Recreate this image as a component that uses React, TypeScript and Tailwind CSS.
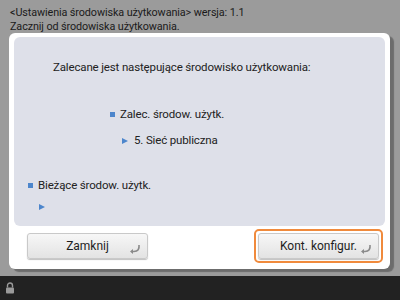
import React from 'react';

const font = { fontFamily: 'Roboto, "Noto Sans", sans-serif' };

const EnterIcon: React.FC = () => (
  <svg width="12" height="10" viewBox="0 0 12 10" className="absolute right-[6px] bottom-[4px]">
    <path d="M10 1 C10.5 5 9 7.5 5 7.5 L2.5 7.5" fill="none" stroke="#8a8a8a" strokeWidth="1.6" />
    <path d="M1 7.5 L4 5 L4 10 Z" fill="#8a8a8a" />
  </svg>
);

const Button: React.FC<{ label: string }> = ({ label }) => (
  <div className="relative w-[121px] h-[26px] flex items-center justify-center rounded-[3px] border border-[#c9c9c9] bg-gradient-to-b from-[#f7f7f7] to-[#e3e3e3] shadow-[0_1px_1px_rgba(0,0,0,0.25)] text-[12px] text-[#1e1e1e]">
    {label}
    <EnterIcon />
  </div>
);

const Square: React.FC = () => <span className="inline-block w-[5px] h-[5px] bg-[#4d86cc] mr-[5px]" />;
const Tri: React.FC = () => (
  <svg width="6" height="6" viewBox="0 0 6 6" className="mr-[6px]">
    <path d="M0 0 L6 3 L0 6 Z" fill="#4d86cc" />
  </svg>
);

const App: React.FC = () => {
  return (
    <div className="w-[400px] h-[300px] bg-[#9b9b9b] flex flex-col overflow-hidden text-[#222222]" style={font}>
      <div className="h-[33px] pl-[10px] pr-[9px] pt-[6px] text-[10.8px] leading-[14px] tracking-[-0.1px] text-[#1a1a1a]">
        <div>&lt;Ustawienia środowiska użytkowania&gt; wersja: 1.1</div>
        <div>Zacznij od środowiska użytkowania.</div>
      </div>
      <div className="ml-[9px] w-[381px] h-[236px] bg-white rounded-[6px] shadow-[4px_3px_1px_rgba(0,0,0,0.3)] px-[5px] pt-[4px] pb-[6px] flex flex-col">
        <div className="h-[193px] bg-[#dee0e9] rounded-[6px] text-[11.5px] tracking-[-0.15px] flex flex-col">
          <div className="pl-[39px] pt-[23px] leading-[15px]">Zalecane jest następujące środowisko użytkowania:</div>
          <div className="pl-[96px] pt-[32px] flex items-center leading-[15px]">
            <Square />Zalec. środow. użytk.
          </div>
          <div className="pl-[108px] pt-[11px] flex items-center leading-[15px]">
            <Tri />5. Sieć publiczna
          </div>
          <div className="pl-[14px] pt-[30px] flex items-center leading-[15px]">
            <Square />Bieżące środow. użytk.
          </div>
          <div className="pl-[25px] pt-[11px] flex items-center">
            <Tri />
          </div>
        </div>
        <div className="flex justify-between items-center mt-[3px] pl-[9px] pr-[2px]">
          <div className="p-[4px]"><Button label="Zamknij" /></div>
          <div className="p-[2px] border-2 border-[#f08a3c] rounded-[5px]"><Button label="Kont. konfigur." /></div>
        </div>
      </div>
      <div className="flex-1" />
      <div className="h-[24px] bg-[#222222] flex items-center pl-[5px]">
        <svg width="10" height="12" viewBox="0 0 10 12">
          <path d="M2.5 5.5 V3.5 a2.5 2.5 0 0 1 5 0 V5.5" fill="none" stroke="#9a9a9a" strokeWidth="1.4" />
          <rect x="1" y="5.5" width="8" height="6" rx="1" fill="#9a9a9a" />
        </svg>
      </div>
    </div>
  );
};

export default App;
